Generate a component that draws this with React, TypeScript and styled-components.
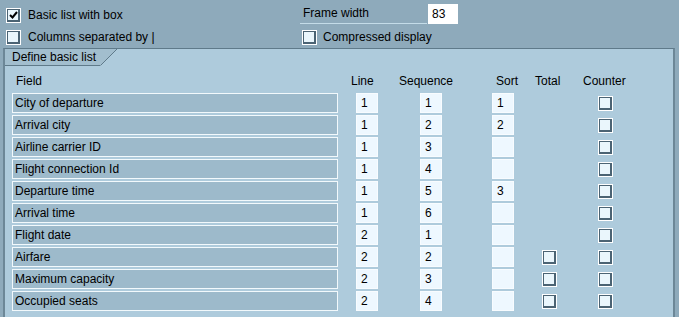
import React from "react";
import styled, { createGlobalStyle } from "styled-components";

const Global = createGlobalStyle`
  html, body { margin: 0; padding: 0; }
  body {
    background: #8eaabb;
    font-family: "Liberation Sans", Arial, sans-serif;
    font-size: 12px;
    color: #000;
    overflow: hidden;
  }
`;

const Page = styled.div`
  width: 679px;
  height: 317px;
  display: flex;
  flex-direction: column;
  overflow: hidden;
`;

const Top = styled.div`
  display: grid;
  grid-template-columns: 294px 1fr;
  grid-template-rows: 20px 20px;
  row-gap: 2px;
  padding: 5px 0 1px 6px;
`;

const CheckRow = styled.label`
  display: flex;
  align-items: center;
  gap: 7px;
  line-height: 14px;
  white-space: nowrap;
`;

const Box = styled.span`
  box-sizing: border-box;
  width: 15px;
  height: 15px;
  border: 1px solid #ffffff;
  display: flex;
  flex: none;
`;

const BoxInner = styled.span`
  flex: 1;
  box-sizing: border-box;
  border: 1px solid #4b6373;
  border-right-width: 2px;
  border-bottom-width: 2px;
  background: #eaf6fc;
  display: flex;
  align-items: center;
  justify-content: center;
`;

const Check = ({ checked }: { checked?: boolean }) => (
  <Box>
    <BoxInner>
      {checked && (
        <svg width="9" height="8" viewBox="0 0 9 8">
          <path d="M1 4 L3.5 6.5 L8 1" stroke="#000" strokeWidth="2" fill="none" />
        </svg>
      )}
    </BoxInner>
  </Box>
);

const FrameRow = styled.div`
  display: flex;
  align-items: stretch;
  margin-top: -1px;
  margin-bottom: 1px;
`;

const FrameLabel = styled.div`
  width: 124px;
  padding-left: 3px;
  border-bottom: 1px solid #c4dce8;
  line-height: 19px;
`;

const FrameInput = styled.div`
  width: 26px;
  margin-left: 1px;
  background: #ffffff;
  padding-left: 4px;
  line-height: 20px;
`;

const RightCheck = styled(CheckRow)`
  padding-left: 2px;
  gap: 6px;
`;

const Panel = styled.div`
  margin-left: 3px;
  width: 668px;
  flex: 1;
  background: #aecbdc;
  border-top: 1px solid #5f7a8a;
  border-left: 2px solid #6c8797;
  border-right: 2px solid #6c8797;
  display: flex;
  flex-direction: column;
`;

const TabRow = styled.div`
  display: flex;
  height: 17px;
`;

const TabLabel = styled.div`
  box-sizing: border-box;
  width: 95px;
  height: 17px;
  padding-left: 7px;
  background: #a2bece;
  border-bottom: 1px solid #5f7a8a;
  line-height: 16px;
  white-space: nowrap;
`;

const TabSlant = () => (
  <svg width="18" height="17" viewBox="0 0 18 17" style={{ display: "block" }}>
    <polygon points="0,0 17,0 0,17" fill="#a2bece" />
    <line x1="17" y1="0" x2="0.5" y2="16.5" stroke="#5f7a8a" strokeWidth="1" />
  </svg>
);

const Table = styled.div`
  display: grid;
  grid-template-columns: 339px 48px 93px 43px 48px auto;
  grid-auto-rows: 20px;
  grid-template-rows: 18px;
  row-gap: 2px;
  padding: 7px 0 0 7px;
`;

const Head = styled.div<{ $off?: number }>`
  padding-left: ${(p) => p.$off ?? 0}px;
  line-height: 16px;
  white-space: nowrap;
`;

const FieldBox = styled.div`
  box-sizing: border-box;
  width: 326px;
  height: 20px;
  background: #9dbacb;
  border: 1px solid #f2f9fc;
  padding-left: 2px;
  line-height: 18px;
  white-space: nowrap;
`;

const Cell = styled.div<{ $off?: number }>`
  padding-left: ${(p) => p.$off ?? 0}px;
  display: flex;
  align-items: center;
`;

const NumBox = styled.div`
  box-sizing: border-box;
  width: 22px;
  height: 20px;
  background: #eef8ff;
  border: 1px solid #f8fcff;
  padding-left: 4px;
  line-height: 18px;
`;

type Row = {
  field: string;
  line: string;
  seq: string;
  sort: string;
  total: boolean;
};

const rows: Row[] = [
  { field: "City of departure", line: "1", seq: "1", sort: "1", total: false },
  { field: "Arrival city", line: "1", seq: "2", sort: "2", total: false },
  { field: "Airline carrier ID", line: "1", seq: "3", sort: "", total: false },
  { field: "Flight connection Id", line: "1", seq: "4", sort: "", total: false },
  { field: "Departure time", line: "1", seq: "5", sort: "3", total: false },
  { field: "Arrival time", line: "1", seq: "6", sort: "", total: false },
  { field: "Flight date", line: "2", seq: "1", sort: "", total: false },
  { field: "Airfare", line: "2", seq: "2", sort: "", total: true },
  { field: "Maximum capacity", line: "2", seq: "3", sort: "", total: true },
  { field: "Occupied seats", line: "2", seq: "4", sort: "", total: true },
];

export default function App() {
  return (
    <Page>
      <Global />
      <Top>
        <CheckRow>
          <Check checked />
          Basic list with box
        </CheckRow>
        <FrameRow>
          <FrameLabel>Frame width</FrameLabel>
          <FrameInput>83</FrameInput>
        </FrameRow>
        <CheckRow>
          <Check />
          Columns separated by |
        </CheckRow>
        <RightCheck>
          <Check />
          Compressed display
        </RightCheck>
      </Top>
      <Panel>
        <TabRow>
          <TabLabel>Define basic list</TabLabel>
          <TabSlant />
        </TabRow>
        <Table>
          <Head $off={4}>Field</Head>
          <Head>Line</Head>
          <Head>Sequence</Head>
          <Head $off={4}>Sort</Head>
          <Head>Total</Head>
          <Head>Counter</Head>
          {rows.map((r) => (
            <React.Fragment key={r.field}>
              <FieldBox>{r.field}</FieldBox>
              <Cell $off={5}>
                <NumBox>{r.line}</NumBox>
              </Cell>
              <Cell $off={21}>
                <NumBox>{r.seq}</NumBox>
              </Cell>
              <Cell>
                <NumBox>{r.sort}</NumBox>
              </Cell>
              <Cell $off={7}>{r.total && <Check />}</Cell>
              <Cell $off={15}>
                <Check />
              </Cell>
            </React.Fragment>
          ))}
        </Table>
      </Panel>
    </Page>
  );
}
